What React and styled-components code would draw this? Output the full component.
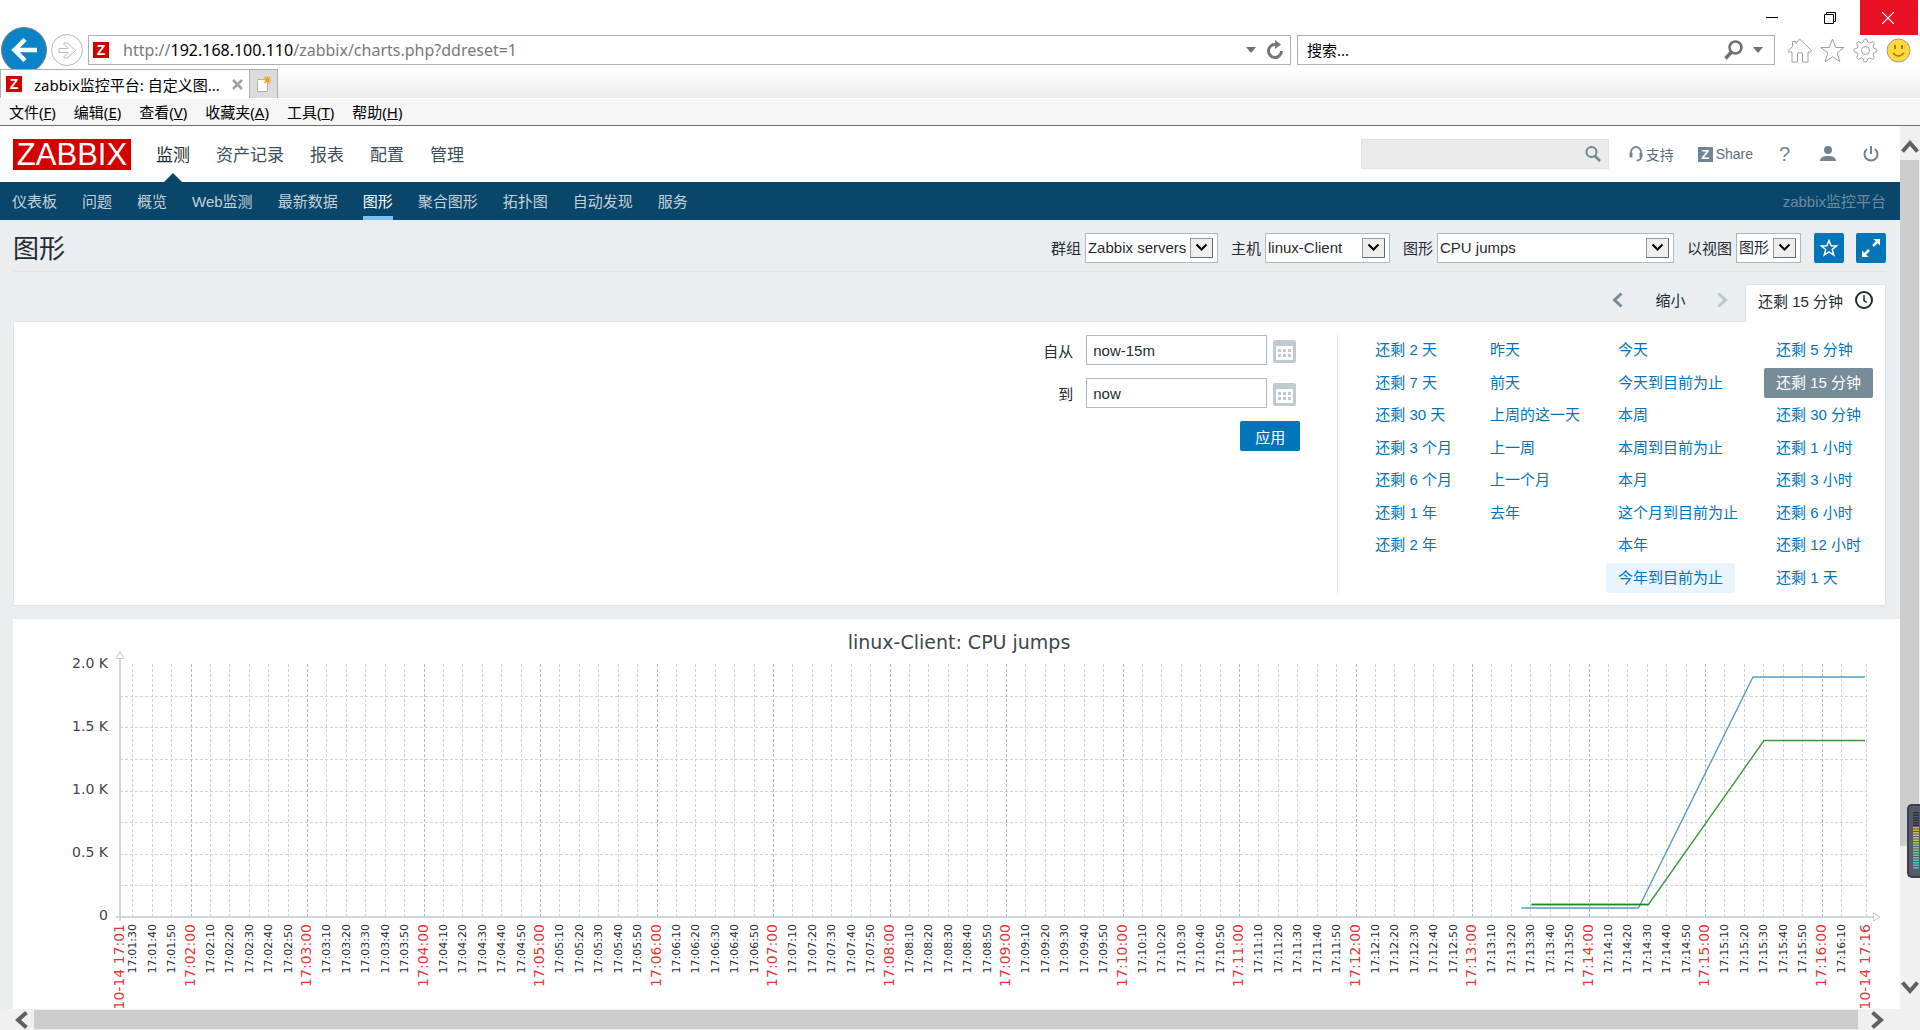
import React from "react";
import styled, { createGlobalStyle, css } from "styled-components";

const uiFont = '"Noto Sans", "Noto Sans CJK SC", sans-serif';
const pageFont = '"Liberation Sans", "Noto Sans CJK SC", sans-serif';

const GlobalStyle = createGlobalStyle`
  *, *::before, *::after { box-sizing: border-box; }
  body { margin: 0; background: #fff; font-family: ${pageFont}; font-size: 15px; color: #1f2c33; }
  button, input, select { font: inherit; color: inherit; margin: 0; }
  button { padding: 0; border: 0; background: none; cursor: pointer; }
  a { color: inherit; text-decoration: none; }
  svg { display: block; flex: none; }
`;

/* ---------- browser window ---------- */

const Window = styled.div`
  display: flex;
  flex-direction: column;
  height: 100vh;
  overflow: hidden;
`;

const TitleBar = styled.div`
  display: flex;
  justify-content: flex-end;
  height: 35px;
  flex: none;
  padding-right: 2px;
`;

const WindowButton = styled.button`
  display: flex;
  align-items: center;
  justify-content: center;
  width: 58px;
  padding-right: 3px;
  color: ${(p) => (p.$close ? "#fff" : "#000")};
  background: ${(p) => (p.$close ? "#e81123" : "transparent")};
`;

const Toolbar = styled.div`
  display: flex;
  align-items: center;
  height: 30px;
  flex: none;
  padding: 0 9px 0 1px;
  margin-bottom: 4px;
  font-family: ${uiFont};
`;

const BackButton = styled.button`
  display: flex;
  align-items: center;
  justify-content: center;
  width: 46px;
  height: 46px;
  border-radius: 50%;
  border: 1px solid #7d7d7d;
  background: #0a84c6;
`;

const ForwardButton = styled.button`
  display: flex;
  align-items: center;
  justify-content: center;
  width: 32px;
  height: 32px;
  margin: 0 5px 0 4px;
  border-radius: 50%;
  border: 1px solid #b8b8b8;
`;

const AddressBox = styled.form`
  display: flex;
  align-items: center;
  height: 30px;
  border: 1px solid #b0b0b0;
  background: #fff;
  ${(p) => (p.$search ? css`width: 478px; margin-left: 6px; padding: 0 11px 0 9px;` : css`flex: 1; padding: 0 6px 0 4px;`)}
`;

const Url = styled.div`
  flex: 1;
  padding-left: 14px;
  font-size: 16px;
  line-height: 28px;
  color: #7a7a7a;
  b { font-weight: 400; color: #000; }
`;

const BareInput = styled.input`
  flex: 1;
  min-width: 0;
  border: 0;
  padding: 0;
  outline: 0;
  background: none;
  color: #000;
  &::placeholder { color: #000; opacity: 1; }
`;

const BoxTools = styled.div`
  display: flex;
  align-items: center;
  gap: 10px;
`;

const BrowserTools = styled.div`
  display: flex;
  gap: 8px;
  margin-left: 12px;
`;

const Favicon = styled.span`
  display: flex;
  align-items: center;
  justify-content: center;
  flex: none;
  width: 16px;
  height: 16px;
  background: #d40000;
  color: #fff;
  font: bold 14px/16px ${pageFont};
`;

const TabStrip = styled.div`
  position: relative;
  display: flex;
  height: 30px;
  flex: none;
  font-family: ${uiFont};
  background: linear-gradient(#fff, #ebebeb);
  border-bottom: 1px solid #fff;
`;

const BrowserTab = styled.div`
  display: flex;
  align-items: center;
  width: 250px;
  padding: 0 6px 0 5px;
  border: 1px solid #b0b0b0;
  border-bottom: 0;
  background: #fff;
  color: #000;
  white-space: nowrap;
`;

const TabTitle = styled.span`
  flex: 1;
  padding-left: 12px;
`;

const NewTab = styled.button`
  display: flex;
  align-items: center;
  justify-content: center;
  width: 28px;
  border: 1px solid #b0b0b0;
  border-width: 1px 1px 0 0;
  background: #dcdcdc;
`;

const MenuBar = styled.nav`
  display: flex;
  align-items: center;
  gap: 18px;
  height: 27px;
  flex: none;
  padding: 0 0 2px 9px;
  background: #f6f6f6;
  border-bottom: 1px solid #6d6d6d;
  font-family: ${uiFont};
  color: #000;
`;

const Viewport = styled.div`
  display: grid;
  flex: 1;
  min-height: 0;
  grid-template-columns: minmax(0, 1fr) 20px;
  grid-template-rows: minmax(0, 1fr) 21px;
`;

const Page = styled.div`
  overflow: hidden;
  background: #ebeef0;
`;

const VScroll = styled.div`
  display: flex;
  flex-direction: column;
  align-items: center;
  justify-content: space-between;
  grid-row: 1 / 3;
  grid-column: 2;
  padding: 14px 1px 36px 0;
  background: #f0f0f0;
`;

const VThumb = styled.div`
  width: 19px;
  flex: 0 1 686px;
  margin: 7px 0 auto;
  background: #cdcdcd;
`;

const HScroll = styled.div`
  display: flex;
  align-items: center;
  grid-row: 2;
  grid-column: 1;
  padding: 1px 16px 1px 15px;
  background: #f0f0f0;
`;

const HThumb = styled.div`
  flex: 1;
  align-self: stretch;
  margin: 0 13px 0 6px;
  background: #cdcdcd;
`;

const MeterWidget = styled.div`
  position: fixed;
  right: 0;
  bottom: 152px;
  display: flex;
  flex-direction: column;
  justify-content: center;
  align-items: center;
  width: 13px;
  height: 74px;
  padding-left: 2px;
  border: 2px solid #3b3f4e;
  border-right: 0;
  border-radius: 5px 0 0 5px;
  background: #555b6d;
`;

const meterBars = [
  ...Array(6).fill("#30323e"),
  "#e3a83c", "#dcae40", "#d8b848", "#d0c24c", "#c8c850", "#b8cc54",
  "#a8d05c", "#94d064", "#84d070", "#74d07c", "#60d08c", "#54d09c", "#4cd0ac", "#44d0bc", "#40d0c8", "#38ccc8", "#38ccc8",
];

/* ---------- Zabbix header ---------- */

const Header = styled.header`
  display: flex;
  align-items: center;
  height: 56px;
  padding: 0 8px 0 13px;
  background: #fff;
`;

const Logo = styled.a`
  display: flex;
  align-items: center;
  justify-content: center;
  width: 118px;
  height: 31px;
  background: #d40000;
  color: #fff;
  font-size: 31px;
  line-height: 31px;
`;

const MainNav = styled.nav`
  display: flex;
  align-self: stretch;
  gap: 26px;
  margin-left: 25px;
  font-size: 17px;
  color: #3c4f5a;
`;

const MainLink = styled.a`
  display: flex;
  align-items: center;
  position: relative;
  padding-bottom: 2px;
  ${(p) =>
    p.$active &&
    css`
      color: #1f2c33;
      &::after {
        content: "";
        position: absolute;
        bottom: 0;
        left: 50%;
        margin-left: -9px;
        border: 9px solid transparent;
        border-top: 0;
        border-bottom-color: #0a466a;
      }
    `}
`;

const HeaderTools = styled.div`
  display: flex;
  align-items: center;
  margin-left: auto;
  font-size: 14px;
  color: #5c6e78;
`;

const SearchForm = styled.form`
  display: flex;
  align-items: center;
  width: 248px;
  height: 30px;
  padding: 0 7px;
  margin-right: 20px;
  border: 1px solid #dfe4e7;
  background: #ebebeb;
`;

const ToolLink = styled.a`
  display: flex;
  align-items: center;
  justify-content: center;
  gap: 3px;
  margin-right: ${(p) => p.$gap || 0}px;
  min-width: ${(p) => (p.$icon ? 43 : 0)}px;
  height: 30px;
`;

const Question = styled.span`
  font-size: 20px;
  color: #6f8692;
`;

const ShareBadge = styled.span`
  width: 15px;
  height: 15px;
  background: #6f8692;
  color: #fff;
  font: bold 13px/15px ${pageFont};
  text-align: center;
`;

const SubNav = styled.nav`
  display: flex;
  align-items: stretch;
  gap: 25px;
  height: 38px;
  padding: 0 14px 0 12px;
  background: #0a466a;
  color: #c3d1da;
`;

const SubLink = styled.a`
  display: flex;
  align-items: center;
  border: solid transparent;
  border-width: 2px 0 4px;
  ${(p) => p.$active && css`color: #fff; border-bottom-color: #7bc3f7;`}
`;

const ServerName = styled.span`
  display: flex;
  align-items: center;
  margin-left: auto;
  padding-bottom: 2px;
  color: #6b8ba0;
`;

/* ---------- page content ---------- */

const Main = styled.main`
  padding: 0 14px 0 13px;
`;

const TitleRow = styled.div`
  display: flex;
  align-items: center;
  height: 52px;
  padding-top: 4px;
  border-bottom: 1px solid #dfe4e7;
`;

const PageTitle = styled.h1`
  margin: 0;
  padding-top: 3px;
  font-size: 26px;
  font-weight: 400;
  line-height: 30px;
`;

const Filters = styled.form`
  display: flex;
  align-items: center;
  gap: 12px;
  height: 32px;
  margin-left: auto;
`;

const FilterLabel = styled.label`
  display: flex;
  align-items: center;
  gap: 4px;
  margin-right: 1px;
`;

const SelectBox = styled.span`
  position: relative;
  display: flex;
  width: ${(p) => p.$width}px;
  height: 30px;
`;

const SelectField = styled.select`
  appearance: none;
  width: 100%;
  padding: 0 28px 0 2px;
  border: 1px solid #acbbc2;
  border-radius: 0;
  background: #fff;
`;

const SelectArrow = styled.span`
  position: absolute;
  top: 5px;
  right: 5px;
  display: flex;
  align-items: center;
  justify-content: center;
  width: 23px;
  height: 20px;
  border: 1px solid #9a9a9a;
  border-right-color: #6a6a6a;
  border-bottom-color: #6a6a6a;
  background: #eee;
  pointer-events: none;
`;

const BlueButton = styled.button`
  display: flex;
  align-items: center;
  justify-content: center;
  width: ${(p) => (p.$wide ? 60 : 30)}px;
  height: 30px;
  border-radius: 2px;
  background: #0275b8;
  color: #fff;
`;

const TimeNav = styled.div`
  display: flex;
  justify-content: flex-end;
  margin-top: 12px;
  height: 37px;
`;

const TimeButton = styled.button`
  display: flex;
  align-items: center;
  justify-content: center;
  width: ${(p) => (p.$text ? 61 : 44)}px;
  height: 31px;
  color: ${(p) => (p.$text ? "#1f2c33" : p.disabled ? "#b9c5cb" : "#768d99")};
`;

const TimeTab = styled.button`
  position: relative;
  display: flex;
  align-items: center;
  gap: 12px;
  height: 38px;
  padding: 0 12px 7px;
  border: 1px solid #dfe4e7;
  border-bottom: 0;
  background: #fff;
`;

const TimePanel = styled.section`
  display: flex;
  justify-content: flex-end;
  padding: 13px 12px 12px;
  border: 1px solid #dfe4e7;
  background: #fff;
`;

const RangeForm = styled.form`
  display: grid;
  grid-template-columns: auto 181px 33px;
  grid-auto-rows: 30px;
  align-content: start;
  align-items: center;
  row-gap: 13px;
  margin-right: 37px;
`;

const RangeLabel = styled.label`
  padding-right: 13px;
  text-align: right;
`;

const RangeInput = styled.input`
  width: 100%;
  height: 30px;
  padding: 0 6px;
  border: 1px solid #acbbc2;
  outline: 0;
  background: #fff;
`;

const CalendarButton = styled.button`
  display: flex;
  align-items: center;
  justify-content: center;
  height: 30px;
  padding: 3px 0 0 2px;
`;

const ApplyCell = styled.div`
  display: flex;
  grid-column: 1 / 4;
  justify-content: flex-end;
`;

const QuickRanges = styled.div`
  display: flex;
  gap: 14px;
  padding-left: 25px;
  border-left: 1px solid #dfe4e7;
`;

const RangeColumn = styled.div`
  display: grid;
  grid-template-rows: repeat(8, 30px);
  align-content: space-between;
  justify-items: start;
  height: 258px;
`;

const RangeLink = styled.a`
  padding: 0 12px;
  border-radius: 2px;
  line-height: 30px;
  white-space: nowrap;
  color: ${(p) => (p.$selected ? "#fff" : "#0275b8")};
  background: ${(p) => (p.$selected ? "#768d99" : p.$hover ? "#e8f5ff" : "transparent")};
`;

const ChartBox = styled.section`
  margin: 13px -14px 0 0;
  height: 420px;
  overflow: hidden;
  background: #fff;
`;

/* ---------- data ---------- */

const menus = [["文件", "F"], ["编辑", "E"], ["查看", "V"], ["收藏夹", "A"], ["工具", "T"], ["帮助", "H"]];
const mainNav = ["监测", "资产记录", "报表", "配置", "管理"];
const subNav = ["仪表板", "问题", "概览", "Web监测", "最新数据", "图形", "聚合图形", "拓扑图", "自动发现", "服务"];
const selects = [
  { id: "group", label: "群组", value: "Zabbix servers", width: 133 },
  { id: "host", label: "主机", value: "linux-Client", width: 125 },
  { id: "graph", label: "图形", value: "CPU jumps", width: 237 },
  { id: "view", label: "以视图", value: "图形", width: 65 },
];
const ranges = [
  ["还剩 2 天", "还剩 7 天", "还剩 30 天", "还剩 3 个月", "还剩 6 个月", "还剩 1 年", "还剩 2 年"],
  ["昨天", "前天", "上周的这一天", "上一周", "上一个月", "去年"],
  ["今天", "今天到目前为止", "本周", "本周到目前为止", "本月", "这个月到目前为止", "本年", "今年到目前为止"],
  ["还剩 5 分钟", "还剩 15 分钟", "还剩 30 分钟", "还剩 1 小时", "还剩 3 小时", "还剩 6 小时", "还剩 12 小时", "还剩 1 天"],
];

/* ---------- chart ---------- */

const LEFT = 107;
const RIGHT = 1853;
const TOP = 45;
const BOTTOM = 298;
const FIRST_MINUTE = 178;
const MINUTE = 116.5;

function timeTicks() {
  const ticks = [];
  for (let s = -30; s <= 14 * 60 + 10; s += 10) {
    const total = 120 + s;
    const mm = String(Math.floor(total / 60)).padStart(2, "0");
    const ss = String(total % 60).padStart(2, "0");
    ticks.push({ x: Math.floor(FIRST_MINUTE + (s / 60) * MINUTE), label: `17:${mm}:${ss}`, major: s % 60 === 0 });
  }
  return ticks;
}

const TimeLabel = ({ x, major, children }) => (
  <text
    transform={`translate(${x + 4} 305) rotate(-90)`}
    textAnchor="end"
    fontSize={major ? 14 : 11}
    fill={major ? "#e33734" : "#1f2c33"}
  >
    {children}
  </text>
);

function Chart() {
  const rows = [1, 2, 3, 4, 5, 6, 7].map((n) => Math.round(BOTTOM - (n * (BOTTOM - TOP)) / 8));
  const values = ["0", "0.5 K", "1.0 K", "1.5 K", "2.0 K"];
  return (
    <svg width="1887" height="420" fontFamily='"DejaVu Sans", sans-serif' role="img" aria-label="linux-Client: CPU jumps">
      <text x="946" y="30" fontSize="19" textAnchor="middle" fill="#3c474d">linux-Client: CPU jumps</text>
      <g strokeDasharray="3 2" shapeRendering="crispEdges">
        {rows.map((y) => (
          <line key={y} x1={LEFT} x2={RIGHT} y1={y + 0.5} y2={y + 0.5} stroke="#ccd5d9" />
        ))}
        {timeTicks().map((t) => (
          <line key={t.x} x1={t.x + 0.5} x2={t.x + 0.5} y1={TOP} y2={BOTTOM} stroke={t.major ? "#acbbc2" : "#ccd5d9"} />
        ))}
        <line x1={RIGHT + 0.5} x2={RIGHT + 0.5} y1={TOP} y2={BOTTOM} stroke="#ccd5d9" />
      </g>
      <g fill="none" stroke="#c0cbd1">
        <path d="M107 40V302M103 298H1860" strokeWidth="1.5" />
        <path d="M103 39.5h8l-4-7zM1860.500 294v8l6.500-4z" fill="#fff" />
      </g>
      {values.map((v, i) => (
        <text key={v} x="95" y={301 - i * 63} fontSize="14" textAnchor="end" fill="#3c474d">{v}</text>
      ))}
      <TimeLabel x={LEFT} major>10-14 17:01</TimeLabel>
      {timeTicks().map((t) => (
        <TimeLabel key={t.label} x={t.x} major={t.major}>{t.label}</TimeLabel>
      ))}
      <TimeLabel x={RIGHT} major>10-14 17:16</TimeLabel>
      <g fill="none" strokeWidth="1.4">
        <path d="M1518.500 285.500H1635.500L1751 121.500H1852" stroke="#3c9a3c" />
        <path d="M1508.500 289H1625.500L1740 58H1852" stroke="#5a9bc8" />
        <path d="M1518.500 285.500H1635.500" stroke="#1a8a1a" />
      </g>
    </svg>
  );
}

/* ---------- icons ---------- */

const Chevron = ({ d, w, h, stroke = "#606060", sw = 4 }) => (
  <svg width={w} height={h} viewBox={`0 0 ${w} ${h}`} fill="none" stroke={stroke} strokeWidth={sw}>
    <path d={d} />
  </svg>
);

const Caret = () => (
  <svg width="10" height="6"><path d="M0 0h10L5 6z" fill="#707070" /></svg>
);

const gearPoints = Array.from({ length: 32 }, (_, i) => {
  const r = i % 4 < 2 ? 11.5 : 8.5;
  const a = ((i + 0.5) / 32) * Math.PI * 2 - Math.PI / 16;
  return `${12.5 + r * Math.cos(a)},${12.5 + r * Math.sin(a)}`;
}).join(" ");

const CalendarIcon = () => (
  <svg width="23" height="23">
    <rect width="23" height="23" rx="2" fill="#c0cbd1" />
    <rect x="3" y="6" width="17" height="14" fill="#fff" />
    {[5, 10, 15].map((x) => [9, 14].map((y) => <rect key={`${x}-${y}`} x={x} y={y} width="3" height="3" fill="#c0cbd1" />))}
  </svg>
);

export default function App() {
  return (
    <Window>
      <GlobalStyle />
      <TitleBar>
        <WindowButton aria-label="Minimize">
          <svg width="12" height="12"><path d="M0 5.500h12" stroke="#000" /></svg>
        </WindowButton>
        <WindowButton aria-label="Restore">
          <svg width="12" height="12" fill="none" stroke="#000"><path d="M.5 2.500h9v9h-9zM2.500 2.500v-2h9v9h-2" /></svg>
        </WindowButton>
        <WindowButton $close aria-label="Close">
          <svg width="12" height="12" stroke="#fff" strokeWidth="1.200"><path d="M0 0l12 12M12 0L0 12" /></svg>
        </WindowButton>
      </TitleBar>

      <Toolbar>
        <BackButton aria-label="Back">
          <svg width="26" height="24" fill="none" stroke="#fff" strokeWidth="4.500"><path d="M26 12H4M14 1.500L3.500 12L14 22.500" /></svg>
        </BackButton>
        <ForwardButton aria-label="Forward">
          <svg width="19" height="17" fill="none" stroke="#b8b8b8"><path d="M1 6.500h9L6 2.500V1h3.500l8 7.500-8 7.500H6v-1.500l4-4H1z" /></svg>
        </ForwardButton>
        <AddressBox onSubmit={(e) => e.preventDefault()}>
          <Favicon>Z</Favicon>
          <Url>http://<b>192.168.100.110</b>/zabbix/charts.php?ddreset=1</Url>
          <BoxTools>
            <Caret />
            <svg width="18" height="20" fill="none" stroke="#777" strokeWidth="3"><path d="M12.500 5.500A6.500 6.500 0 1 0 15.500 11" /><path d="M9 0l6 4.500L9 9z" fill="#777" stroke="none" /></svg>
          </BoxTools>
        </AddressBox>
        <AddressBox $search onSubmit={(e) => e.preventDefault()}>
          <BareInput aria-label="搜索" placeholder="搜索..." />
          <BoxTools>
            <svg width="19" height="20" fill="none" stroke="#707070"><circle cx="11.500" cy="7.500" r="6" strokeWidth="2.500" /><path d="M7.500 12L1.500 18.500" strokeWidth="3.500" /></svg>
            <Caret />
          </BoxTools>
        </AddressBox>
        <BrowserTools>
          <button aria-label="Home">
            <svg width="25" height="25" fill="#fff" stroke="#a0a0a0"><path d="M.8 13.500L5.500 8.500V3.500h3.500v2L12.500 1 24.500 12.500l-1 1.500H21v10h-5.500v-9h-5v9H5V14H1.500z" /></svg>
          </button>
          <button aria-label="Favorites">
            <svg width="25" height="25" fill="#fff" stroke="#a0a0a0"><path d="M12.500 1l3.200 8.500h8.500l-7 5.400 2.700 9-7.400-5.300-7.400 5.300 2.700-9-7-5.400h8.500z" /></svg>
          </button>
          <button aria-label="Tools">
            <svg width="25" height="25" fill="#fff" stroke="#a0a0a0"><polygon points={gearPoints} /><circle cx="12.500" cy="12.500" r="4" /></svg>
          </button>
          <button aria-label="Feedback">
            <svg width="25" height="25"><circle cx="12.500" cy="12.500" r="11.500" fill="#ffd93b" stroke="#a0a0a0" /><path d="M9 7v4M16 7v4" stroke="#a08020" strokeWidth="2" /><path d="M7 15q5.500 6 11 0" fill="none" stroke="#a08020" strokeWidth="1.800" /></svg>
          </button>
        </BrowserTools>
      </Toolbar>

      <TabStrip>
        <BrowserTab>
          <Favicon>Z</Favicon>
          <TabTitle>zabbix监控平台: 自定义图...</TabTitle>
          <button aria-label="Close tab">
            <svg width="11" height="11" stroke="#a0a0a0" strokeWidth="2.500"><path d="M1 1l9 9M10 1L1 10" /></svg>
          </button>
        </BrowserTab>
        <NewTab aria-label="New tab">
          <svg width="16" height="17"><path d="M1.500 3.500h10v12h-10z" fill="#fbfbfb" stroke="#b0b0b0" /><path d="M11.500 0v8M7.500 4h8M8.500 1l6 6M14.500 1l-6 6" stroke="#f0a020" strokeWidth="1.200" /></svg>
        </NewTab>
      </TabStrip>

      <MenuBar>
        {menus.map(([name, key]) => (
          <button key={key}>{name}(<u>{key}</u>)</button>
        ))}
      </MenuBar>

      <Viewport>
        <Page>
          <Header>
            <Logo href="#">ZABBIX</Logo>
            <MainNav>
              {mainNav.map((item, i) => <MainLink key={item} href="#" $active={i === 0}>{item}</MainLink>)}
            </MainNav>
            <HeaderTools>
              <SearchForm onSubmit={(e) => e.preventDefault()}>
                <BareInput aria-label="Search" />
                <svg width="16" height="16" fill="none" stroke="#6f8692" strokeWidth="2"><circle cx="6.500" cy="6" r="5" /><path d="M10 10l5 5" strokeWidth="2.500" /></svg>
              </SearchForm>
              <ToolLink href="#" $gap={24}>
                <svg width="14" height="16" fill="none" stroke="#6f8692" strokeWidth="1.800"><path d="M2 10V6.500a5 5.500 0 0 1 10 0V11q0 3.500-4.500 3.500" /><path d="M2 7v4.500M12 7v4.500" strokeWidth="3" /></svg>
                支持
              </ToolLink>
              <ToolLink href="#" $gap={10}><ShareBadge>Z</ShareBadge>Share</ToolLink>
              <ToolLink href="#" $icon aria-label="Help"><Question>?</Question></ToolLink>
              <ToolLink href="#" $icon aria-label="Profile">
                <svg width="16" height="16" fill="#6f8692"><circle cx="8" cy="4" r="4" /><path d="M0 15c0-4 4-5 8-5s8 1 8 5z" /></svg>
              </ToolLink>
              <ToolLink href="#" $icon aria-label="Sign out">
                <svg width="16" height="16" fill="none" stroke="#6f8692" strokeWidth="2"><path d="M4 3a6.500 6.500 0 1 0 8 0M8 0v8" /></svg>
              </ToolLink>
            </HeaderTools>
          </Header>

          <SubNav>
            {subNav.map((item) => <SubLink key={item} href="#" $active={item === "图形"}>{item}</SubLink>)}
            <ServerName>zabbix监控平台</ServerName>
          </SubNav>

          <Main>
            <TitleRow>
              <PageTitle>图形</PageTitle>
              <Filters>
                {selects.map((s) => (
                  <FilterLabel key={s.id} htmlFor={s.id}>
                    {s.label}
                    <SelectBox $width={s.width}>
                      <SelectField id={s.id} defaultValue={s.value}><option>{s.value}</option></SelectField>
                      <SelectArrow><Chevron w={13} h={9} d="M1.500 1.500l5 5 5-5" stroke="#000" sw={2} /></SelectArrow>
                    </SelectBox>
                  </FilterLabel>
                ))}
                <BlueButton type="button" aria-label="Add to favourites">
                  <svg width="18" height="18" fill="none" stroke="#fff" strokeWidth="1.500"><path d="M9 1.500l2.100 5.300 5.400.2-4.200 3.500 1.500 5.500L9 12.800 4.200 16l1.500-5.500L1.500 7l5.400-.2z" /></svg>
                </BlueButton>
                <BlueButton type="button" aria-label="Full screen">
                  <svg width="18" height="18" fill="#fff" stroke="#fff" strokeWidth="2.500"><path d="M11 7L15 3M7 11L3 15" /><path d="M11.500 0H18v6.500zM0 11.500V18h6.500z" stroke="none" /></svg>
                </BlueButton>
              </Filters>
            </TitleRow>

            <TimeNav>
              <TimeButton aria-label="Previous"><Chevron w={11} h={16} d="M9.500 1.500l-7 6.500 7 6.500" stroke="currentColor" sw={3} /></TimeButton>
              <TimeButton $text>缩小</TimeButton>
              <TimeButton disabled aria-label="Next"><Chevron w={11} h={16} d="M1.500 1.500l7 6.500-7 6.500" stroke="currentColor" sw={3} /></TimeButton>
              <TimeTab>
                还剩 15 分钟
                <svg width="18" height="18" fill="none" stroke="#1f2c33" strokeWidth="2"><circle cx="9" cy="9" r="8" /><path d="M9 4v5.500l3 2" strokeWidth="1.500" /></svg>
              </TimeTab>
            </TimeNav>

            <TimePanel>
              <RangeForm onSubmit={(e) => e.preventDefault()}>
                <RangeLabel htmlFor="from">自从</RangeLabel>
                <RangeInput id="from" defaultValue="now-15m" />
                <CalendarButton type="button" aria-label="Pick start"><CalendarIcon /></CalendarButton>
                <RangeLabel htmlFor="to">到</RangeLabel>
                <RangeInput id="to" defaultValue="now" />
                <CalendarButton type="button" aria-label="Pick end"><CalendarIcon /></CalendarButton>
                <ApplyCell><BlueButton $wide>应用</BlueButton></ApplyCell>
              </RangeForm>
              <QuickRanges>
                {ranges.map((column) => (
                  <RangeColumn key={column[0]}>
                    {column.map((r) => (
                      <RangeLink key={r} href="#" $selected={r === "还剩 15 分钟"} $hover={r === "今年到目前为止"}>{r}</RangeLink>
                    ))}
                  </RangeColumn>
                ))}
              </QuickRanges>
            </TimePanel>

            <ChartBox><Chart /></ChartBox>
          </Main>
        </Page>

        <VScroll>
          <Chevron w={18} h={13} d="M1.500 11.500L9 3l7.500 8.500" />
          <VThumb />
          <Chevron w={18} h={13} d="M1.500 1.500L9 10l7.500-8.500" />
        </VScroll>
        <HScroll>
          <Chevron w={13} h={18} d="M11.500 1.500L3 9l8.500 7.500" />
          <HThumb />
          <Chevron w={13} h={18} d="M1.500 1.500L10 9l-8.500 7.500" />
        </HScroll>
      </Viewport>

      <MeterWidget>
        <svg width="6" height="58">
          {meterBars.map((c, i) => <rect key={i} y={i * 2.5} width="6" height="1.500" fill={c} />)}
        </svg>
      </MeterWidget>
    </Window>
  );
}
